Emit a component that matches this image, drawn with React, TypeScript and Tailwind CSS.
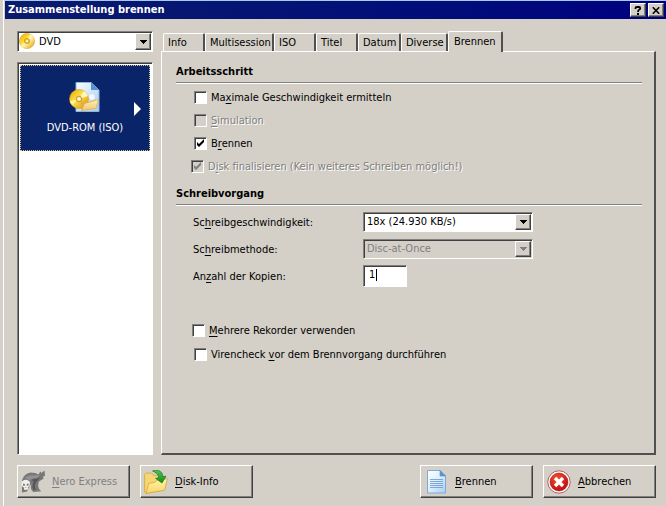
import React, { useState } from 'react'
import { clsx } from 'clsx'

const TABS = [
  { name: 'Info', width: 'w-[42px]' },
  { name: 'Multisession', width: 'w-[69px]' },
  { name: 'ISO', width: 'w-[42px]' },
  { name: 'Titel', width: 'w-[42px]' },
  { name: 'Datum', width: 'w-[43px]' },
  { name: 'Diverse', width: 'w-[47px]' },
  { name: 'Brennen', width: 'w-[55px]' },
]

const SUNKEN = 'border border-t-[#808080] border-l-[#808080] border-r-white border-b-white'
const SUNKEN_INNER = 'shadow-[inset_1px_1px_0_#404040]'
const RAISED =
  'border border-t-white border-l-white border-r-[#404040] border-b-[#404040] shadow-[inset_-1px_-1px_0_#808080]'

interface HotkeyTextProps {
  text: string
}

// "&" marks the underlined hotkey letter, as in resource files
function HotkeyText({ text }: HotkeyTextProps) {
  const [before, after] = text.split('&')
  if (after === undefined) return <>{text}</>
  return (
    <>
      {before}
      <u className="underline-offset-2">{after[0]}</u>
      {after.slice(1)}
    </>
  )
}

function DiscIcon({ className }: { className?: string }) {
  return (
    <svg viewBox="0 0 16 16" className={className} aria-hidden="true">
      <defs>
        <linearGradient id="disc" x1="0" y1="0" x2="1" y2="1">
          <stop offset="0" stopColor="#e8a800" />
          <stop offset="0.4" stopColor="#ffd93a" />
          <stop offset="0.55" stopColor="#fff3a0" />
          <stop offset="1" stopColor="#dc9600" />
        </linearGradient>
      </defs>
      <circle cx="8" cy="8" r="7.6" fill="url(#disc)" stroke="#d49a10" strokeWidth="0.5" />
      <path d="M8 8 L11 1.2 A7.4 7.4 0 0 1 14.2 4.2 Z" fill="#fff6b8" />
      <path d="M8 8 L1.8 11.8 A7.4 7.4 0 0 0 5 14.7 Z" fill="#fff0a0" />
      <circle cx="8" cy="8" r="2.6" fill="#f2c437" stroke="#b98410" strokeWidth="0.6" />
      <circle cx="8" cy="8" r="1" fill="#fff" />
    </svg>
  )
}

function IsoIcon() {
  return (
    <svg viewBox="0 0 32 32" className="size-8" aria-hidden="true">
      <defs>
        <linearGradient id="isoPage" x1="0" y1="0" x2="1" y2="1">
          <stop offset="0" stopColor="#f8fcff" />
          <stop offset="1" stopColor="#a9cdf0" />
        </linearGradient>
        <linearGradient id="isoDisc" x1="0" y1="0" x2="1" y2="1">
          <stop offset="0" stopColor="#eaa400" />
          <stop offset="0.45" stopColor="#ffe04a" />
          <stop offset="1" stopColor="#d98e00" />
        </linearGradient>
        <linearGradient id="isoFolder" x1="0" y1="0" x2="0" y2="1">
          <stop offset="0" stopColor="#fff0b0" />
          <stop offset="1" stopColor="#f3c672" />
        </linearGradient>
      </defs>
      <path d="M7 1.5 H22 L30 9 V30.5 H7 Z" fill="url(#isoPage)" stroke="#8db4dc" />
      <path d="M22 1.5 V9 H30 Z" fill="#5794cc" />
      <circle cx="10" cy="18" r="9.5" fill="url(#isoDisc)" stroke="#d29a18" strokeWidth="0.6" />
      <path d="M10 18 L15 10 A9.5 9.5 0 0 1 19 15 Z" fill="#fff8c4" />
      <path d="M10 18 L3 24 A9.5 9.5 0 0 1 1 20 Z" fill="#fff2a2" />
      <circle cx="10" cy="18" r="2.8" fill="#fbe28a" stroke="#a87913" strokeWidth="0.7" />
      <circle cx="10" cy="18" r="1.1" fill="#fff" />
      <circle cx="23" cy="16" r="2.8" fill="#f4f9ff" />
      <path d="M12.5 29.5 L12 21.5 L16.5 20 L18 21.5 L26.5 19 V27 Z" fill="#e3ad48" />
      <path d="M12.5 29.5 L15.5 22.5 L29.5 18.5 L27 27.5 Z" fill="url(#isoFolder)" stroke="#d9a547" strokeWidth="0.6" />
    </svg>
  )
}

function NeroIcon() {
  return (
    <svg viewBox="0 0 24 24" className="size-6" aria-hidden="true">
      <path
        d="M1 11 C2 6 5 3.4 9.6 2.4 L14.4 3 L17.4 4.4 L19.4 1.6 L20.4 3 L23.6 0.4 L24 6 L22 6.6 L22.6 8.4 L18 11.6 C16.6 15 17 19 20.4 21.2 L12.4 22 C9.4 20 9.4 16.4 10.6 13.6 L8 17.6 L6 21.6 L1 22.6 Z"
        fill="#787878"
      />
      <path d="M4 8 C8 3.6 13.4 6.8 19.4 4.6 L15.6 8.6 C12 7.4 10 9 8.6 10.6 Z" fill="#929292" />
      <path d="M10.6 10 C13.6 8 16 9.6 19.6 7 L16 11 C13.4 14 13.4 17 15 20 L12.6 20 C10.8 17 11.4 14 13 11.4 Z" fill="#565656" />
      <path d="M0.6 12.4 C1.6 8.8 7.6 8.8 9 12.2 L8.6 16 L7.2 17 L7 19.6 L3.4 20 L2.8 17.4 L0.8 16 Z" fill="#f1f0ed" />
      <path d="M2 13.6 L4 14 L3.6 16 L2 15.6 Z M5.6 14 L7.8 13.4 L7.4 15.6 L5.8 16 Z M4.4 17 H5.2 V18 H4.4 Z" fill="#777" />
    </svg>
  )
}

function FolderIcon() {
  return (
    <svg viewBox="0 0 24 24" className="size-6" aria-hidden="true">
      <defs>
        <linearGradient id="folder" x1="0" y1="0" x2="0" y2="1">
          <stop offset="0" stopColor="#fff3a8" />
          <stop offset="1" stopColor="#f8d66a" />
        </linearGradient>
        <linearGradient id="arrow" x1="0" y1="0" x2="0" y2="1">
          <stop offset="0" stopColor="#55c24f" />
          <stop offset="1" stopColor="#138a1b" />
        </linearGradient>
      </defs>
      <path d="M0.6 4.5 L2 3 H7.5 L9.5 5.4 H18 L19.4 7 V20 L2 23.4 L0.6 22 Z" fill="#f6d672" stroke="#d0a12e" strokeWidth="0.7" />
      <path d="M2 23.4 L4.6 13.5 L11 12.2 L13.5 10 L23.4 8.8 L20.6 20.2 Z" fill="url(#folder)" stroke="#d0a12e" strokeWidth="0.7" />
      <path d="M8.6 1 C13 -0.8 18.6 0.6 19 6.8 L22 6.2 L18 13 L11.6 8.4 L14.8 7.6 C14.6 4.4 12 2.4 8.6 1 Z" fill="url(#arrow)" stroke="#167a1c" strokeWidth="0.7" />
    </svg>
  )
}

function PageIcon() {
  return (
    <svg viewBox="0 0 24 24" className="size-6" aria-hidden="true">
      <defs>
        <linearGradient id="page" x1="0" y1="0" x2="1" y2="1">
          <stop offset="0" stopColor="#ffffff" />
          <stop offset="0.5" stopColor="#ddedfb" />
          <stop offset="1" stopColor="#a5cdf3" />
        </linearGradient>
      </defs>
      <path d="M3.5 0.5 H16 L21.5 6 V23 H3.5 Z" fill="url(#page)" stroke="#7fa9d6" />
      <path d="M16 0.5 V6 H21.5 Z" fill="#5c93cc" stroke="#5c8cc0" strokeWidth="0.6" />
      <path d="M6 9.5 H19 M6 11.5 H19 M6 13.5 H19 M6 15.5 H19 M6 17.5 H19" stroke="#7aa6d8" strokeWidth="1" />
    </svg>
  )
}

function CancelIcon() {
  return (
    <svg viewBox="0 0 24 24" className="size-6" aria-hidden="true">
      <defs>
        <radialGradient id="cancel" cx="0.4" cy="0.3" r="0.8">
          <stop offset="0" stopColor="#f4552f" />
          <stop offset="1" stopColor="#b8000c" />
        </radialGradient>
      </defs>
      <circle cx="12" cy="12" r="11.2" fill="#fff" stroke="#b5474c" strokeWidth="0.9" />
      <circle cx="12" cy="12" r="9" fill="url(#cancel)" stroke="#a5141b" strokeWidth="0.6" />
      <path d="M8 8 L16 16 M16 8 L8 16" stroke="#fff" strokeWidth="3.4" />
    </svg>
  )
}

interface CheckRowProps {
  id: string
  text: string
  checked?: boolean
  disabled?: boolean
  indent: string
}

function CheckRow({ id, text, checked = false, disabled = false, indent }: CheckRowProps) {
  const [on, setOn] = useState(checked)

  return (
    <div className={clsx('flex h-[23px] items-center gap-1', indent)}>
      <span className="relative block size-[13px]">
        <input
          id={id}
          type="checkbox"
          checked={on}
          disabled={disabled}
          onChange={(e) => setOn(e.target.checked)}
          className={clsx('block size-[13px] appearance-none', SUNKEN, SUNKEN_INNER, disabled ? 'bg-[#d4d0c8]' : 'bg-white')}
        />
        {on && (
          <svg viewBox="0 0 13 13" className="pointer-events-none absolute inset-0 size-[13px]" aria-hidden="true">
            <path d="M3 5 L5 7 L10 2 V5 L5 10 L3 8 Z" fill={disabled ? '#808080' : '#000'} />
          </svg>
        )}
      </span>
      <label htmlFor={id} className={clsx('whitespace-nowrap', disabled && 'text-[#808080] [text-shadow:1px_1px_0_#fff]')}>
        <HotkeyText text={text} />
      </label>
    </div>
  )
}

interface DropDownProps {
  id: string
  label?: string
  options: string[]
  disabled?: boolean
  className?: string
}

function DropDown({ id, label, options, disabled = false, className }: DropDownProps) {
  return (
    <div className={clsx('relative flex', className)}>
      <select
        id={id}
        aria-label={label}
        disabled={disabled}
        className={clsx(
          'h-full w-full appearance-none pr-5 opacity-100 outline-none',
          label ? 'pl-[21px]' : 'pl-[3px]',
          SUNKEN,
          SUNKEN_INNER,
          disabled ? 'bg-[#d4d0c8] text-[#808080]' : 'bg-white'
        )}
      >
        {options.map((option) => (
          <option key={option}>{option}</option>
        ))}
      </select>
      <span
        className={clsx(
          'pointer-events-none absolute top-[2px] right-[2px] bottom-[2px] flex w-4 items-center justify-center bg-[#d4d0c8]',
          RAISED
        )}
      >
        <svg viewBox="0 0 7 4" className="h-1 w-[7px]" shapeRendering="crispEdges" aria-hidden="true">
          <path d="M0 0 H7 L3.5 4 Z" fill={disabled ? '#808080' : '#000'} />
        </svg>
      </span>
    </div>
  )
}

interface GroupTitleProps {
  children: React.ReactNode
}

function GroupTitle({ children }: GroupTitleProps) {
  return <h2 className="border-b border-[#808080] pb-[2px] font-bold leading-4 shadow-[0_1px_0_#fff]">{children}</h2>
}

interface ActionButtonProps {
  icon: React.ReactNode
  text: string
  disabled?: boolean
}

function ActionButton({ icon, text, disabled = false }: ActionButtonProps) {
  return (
    <button
      type="button"
      disabled={disabled}
      className={clsx('flex h-[33px] w-[113px] items-center gap-[7px] pl-[3px]', RAISED, disabled && 'text-[#808080]')}
    >
      {icon}
      <span className="pt-px whitespace-nowrap">
        <HotkeyText text={text} />
      </span>
    </button>
  )
}

export default function App() {
  const [activeTab, setActiveTab] = useState('Brennen')
  const [copies, setCopies] = useState('1')
  const [copiesTouched, setCopiesTouched] = useState(false)

  return (
    <div className="flex min-h-screen bg-[#d4d0c8] font-['DejaVu_Sans_Condensed','DejaVu_Sans',sans-serif] text-[11px] leading-4 text-black">
      <div className="w-1 border-r border-white" />
      <div className="flex min-w-0 flex-1 flex-col border-t border-[#a6caf0] pl-px">
        {/* Title bar */}
        <header className="flex h-[18px] items-center justify-between bg-linear-to-r from-[#0a1a6c] to-[#000080] pr-[2px] pl-[3px] text-white">
          <h1 className="font-bold">Zusammenstellung brennen</h1>
          <div className="flex gap-[2px]">
            <button type="button" aria-label="Hilfe" className={clsx('flex h-[14px] w-4 items-center justify-center bg-[#d4d0c8]', RAISED)}>
              <svg viewBox="0 0 8 9" className="h-[9px] w-2" aria-hidden="true">
                <path d="M1.5 3 V2 Q1.5 1 3 1 H5 Q6.2 1 6.2 2.2 Q6.2 3.2 5 3.8 Q4 4.4 4 6" fill="none" stroke="#000" strokeWidth="1.8" />
                <path d="M3 7 H5 V9 H3 Z" fill="#000" />
              </svg>
            </button>
            <button type="button" aria-label="Schließen" className={clsx('flex h-[14px] w-4 items-center justify-center bg-[#d4d0c8]', RAISED)}>
              <svg viewBox="0 0 8 7" className="h-[7px] w-2" aria-hidden="true">
                <path d="M0.8 0.3 L7.2 6.7 M7.2 0.3 L0.8 6.7" stroke="#000" strokeWidth="1.6" />
              </svg>
            </button>
          </div>
        </header>

        <main className="flex flex-1 flex-col pt-3 pr-[10px] pb-2 pl-3">
          <div className="flex flex-1 gap-2">
            {/* Disc type and compilation list */}
            <aside className="flex w-[136px] shrink-0 flex-col gap-[10px]">
              <div className="relative">
                <DropDown id="disc-type" label="Disktyp" options={['DVD', 'CD']} className="h-[21px]" />
                <DiscIcon className="pointer-events-none absolute top-[2px] left-[2px] size-4" />
              </div>
              <ul className={clsx('flex-1 bg-white p-[2px]', SUNKEN, SUNKEN_INNER)}>
                <li>
                  <button
                    type="button"
                    className="relative flex h-[86px] w-full flex-col items-center justify-center border border-dotted border-[#d8c48c] bg-[#0a246a] text-white"
                  >
                    <IsoIcon />
                    <span className="mt-[7px]">DVD-ROM (ISO)</span>
                    <svg viewBox="0 0 7 14" className="absolute top-9 right-2 h-[14px] w-[7px]" aria-hidden="true">
                      <path d="M0 0 L7 7 L0 14 Z" fill="#fff" />
                    </svg>
                  </button>
                </li>
              </ul>
            </aside>

            {/* Property sheet */}
            <section className="flex min-w-0 flex-1 flex-col">
              <div role="tablist" className="flex h-5 items-end pl-[2px]">
                {TABS.map((tab) => (
                  <button
                    key={tab.name}
                    type="button"
                    role="tab"
                    aria-selected={activeTab === tab.name}
                    onClick={() => setActiveTab(tab.name)}
                    className={clsx(
                      'rounded-t-[2px] border-t border-r-2 border-l border-t-white border-r-[#505050] border-l-white bg-[#d4d0c8] text-left whitespace-nowrap',
                      tab.width,
                      activeTab === tab.name ? 'z-10 -mb-px h-[21px] pl-[5px]' : 'h-[18px] pt-px pl-1'
                    )}
                  >
                    {tab.name}
                  </button>
                ))}
              </div>

              <div
                role="tabpanel"
                className="flex-1 border-t border-r-2 border-b-2 border-l border-t-white border-r-[#505050] border-b-[#505050] border-l-white pt-3 pr-3 pl-[14px]"
              >
                <GroupTitle>Arbeitsschritt</GroupTitle>
                <div className="mt-[3px]">
                  <CheckRow id="max-speed" text="Ma&ximale Geschwindigkeit ermitteln" indent="pl-[18px]" />
                  <CheckRow id="simulation" text="&Simulation" indent="pl-[18px]" disabled />
                  <CheckRow id="burn" text="B&rennen" indent="pl-[18px]" checked />
                  <CheckRow id="finalize" text="D&isk finalisieren (Kein weiteres Schreiben möglich!)" indent="pl-[15px]" checked disabled />
                </div>

                <div className="mt-2">
                  <GroupTitle>Schreibvorgang</GroupTitle>
                </div>
                <div className="mt-[3px] grid auto-rows-[27px] grid-cols-[170px_170px] items-center pl-[17px]">
                  <label htmlFor="speed" className="pt-[2px]">
                    <HotkeyText text="Sc&hreibgeschwindigkeit:" />
                  </label>
                  <DropDown id="speed" options={['18x (24.930 KB/s)', '12x (16.620 KB/s)', '8x (11.080 KB/s)']} className="h-5" />
                  <label htmlFor="method" className="pt-[2px]">
                    <HotkeyText text="Sc&hreibmethode:" />
                  </label>
                  <DropDown id="method" options={['Disc-at-Once']} className="h-5" disabled />
                  <label htmlFor="copies" className="pt-[2px]">
                    <HotkeyText text="An&zahl der Kopien:" />
                  </label>
                  <span className="relative flex">
                    <input
                      id="copies"
                      type="text"
                      value={copies}
                      onFocus={() => setCopiesTouched(true)}
                      onChange={(e) => setCopies(e.target.value)}
                      className={clsx('h-[22px] w-11 bg-white pb-[2px] pl-[5px] outline-none', SUNKEN, SUNKEN_INNER)}
                    />
                    {/* resting caret until the field takes focus */}
                    {!copiesTouched && <span className="pointer-events-none absolute top-1 left-[13px] h-3 w-px bg-black" />}
                  </span>
                </div>

                <div className="mt-[30px] space-y-px">
                  <CheckRow id="multi-recorder" text="&Mehrere Rekorder verwenden" indent="pl-[16px]" />
                  <CheckRow id="virus-check" text="Virencheck &vor dem Brennvorgang durchführen" indent="pl-[18px]" />
                </div>
              </div>
            </section>
          </div>

          {/* Dialog buttons */}
          <footer className="mt-[10px] flex justify-between">
            <div className="flex gap-[10px]">
              <ActionButton icon={<NeroIcon />} text="&Nero Express" disabled />
              <ActionButton icon={<FolderIcon />} text="&Disk-Info" />
            </div>
            <div className="flex gap-[10px]">
              <ActionButton icon={<PageIcon />} text="&Brennen" />
              <ActionButton icon={<CancelIcon />} text="&Abbrechen" />
            </div>
          </footer>
        </main>
      </div>
    </div>
  )
}
